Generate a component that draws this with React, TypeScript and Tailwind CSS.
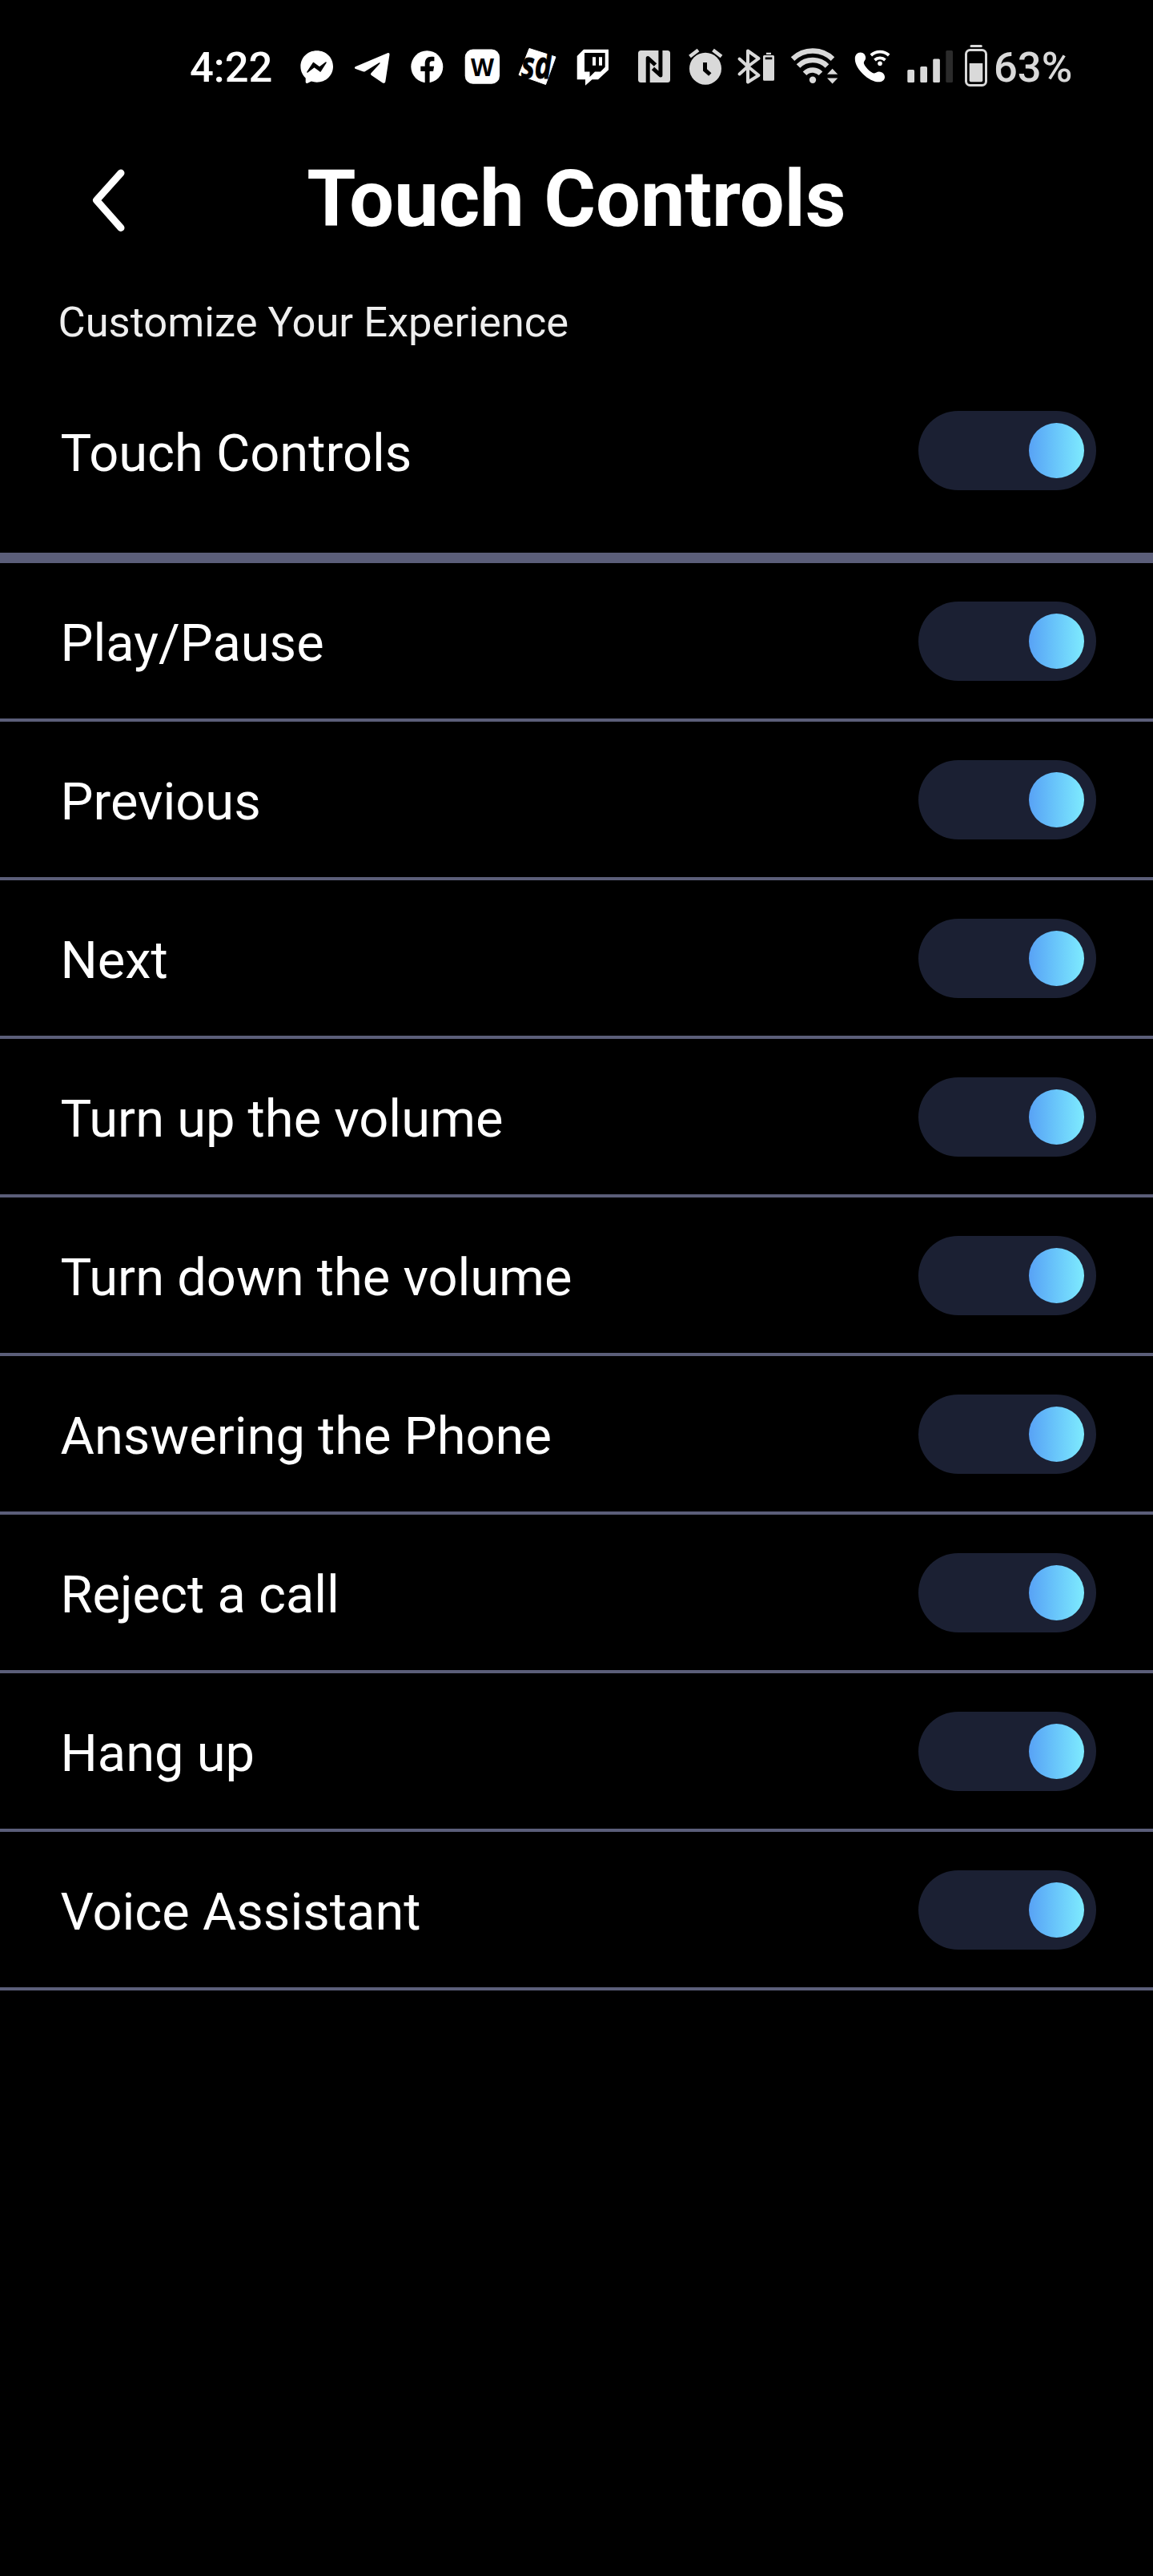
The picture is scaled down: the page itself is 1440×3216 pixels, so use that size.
import React, { useState } from "react";

const actions = [
    "Play/Pause",
    "Previous",
    "Next",
    "Turn up the volume",
    "Turn down the volume",
    "Answering the Phone",
    "Reject a call",
    "Hang up",
    "Voice Assistant",
];

function Toggle({ on, label, onClick }: { on: boolean; label: string; onClick: () => void }) {
    return (
        <button
            type="button"
            role="switch"
            aria-checked={on}
            aria-label={label}
            onClick={onClick}
            className={`flex h-[99px] w-[222px] shrink-0 items-center rounded-full bg-[#1b2033] px-[15px] ${on ? "justify-end" : "justify-start"}`}
        >
            <span className="size-[69px] rounded-full bg-linear-to-r from-[#58a2f5] to-[#7eebfe]" />
        </button>
    );
}

// every status icon is a slice of the same 60px strip, so they sit side by side
function Glyph({ x, w, children }: { x: number; w: number; children: React.ReactNode }) {
    return (
        <svg width={w} height={60} viewBox={`${x} 50 ${w} 60`} fill="currentColor" className="shrink-0">
            {children}
        </svg>
    );
}

function NotificationIcons() {
    return (
        <div className="flex text-white">
            {/* messenger */}
            <Glyph x={370} w={60}>
                <path d="M395.700 63.300c-11.500 0-20.300 8.500-20.300 19.700 0 5.800 2.500 10.800 6.300 14.400v5.200c0 1.100 1.100 1.800 2.100 1.300l5-2.300c2.200.7 4.500 1.100 6.900 1.100 11.500 0 20.300-8.600 20.300-19.700s-8.800-19.700-20.300-19.700z" />
                <path d="M384 90l7.500-11.500 7.500 5.500 8-6-7 11-7.500-5.500z" fill="#000" stroke="#000" strokeWidth="1.500" strokeLinejoin="round" />
            </Glyph>
            {/* telegram */}
            <Glyph x={430} w={70}>
                <path d="M443.800 83.300l40.200-17c1.600-.7 2.700.2 2.500 2l-5.200 33.700c-.3 1.800-2 2.300-3.400 1.400l-14-9.500c-1.200-.9-1.200-1.800-.4-2.700l10.800-11.600c.9-1 0-1.800-1.100-1.100l-17 10.400c-1 .6-2 .7-3 .4l-9-3.300c-1.600-.6-1.700-2-.4-2.700z" />
            </Glyph>
            {/* facebook */}
            <Glyph x={500} w={67}>
                <circle cx="533.300" cy="83.300" r="20" />
                <path d="M530.700 104V89h-5.400v-6.300h5.400v-3.200c0-5.700 3-8.700 8-8.700 1.300 0 2.600.1 3.700.3v5.200h-2.800c-2.300 0-3 1.400-3 3v3.400h5.500l-1 6.300h-4.500v15z" fill="#000" />
            </Glyph>
            <Glyph x={567} w={69}>
                <rect x="580.700" y="61.500" width="43.300" height="43.300" rx="10" />
                <text x="588" y="94.800" fontSize="31" fontWeight="700" textLength="29" lengthAdjust="spacingAndGlyphs" fill="#000" className="font-['Open_Sans',sans-serif]">W</text>
            </Glyph>
            <Glyph x={636} w={72}>
                <path d="M661 60.500l33 10.500-12.500 34.500-33.500-12z" stroke="currentColor" strokeLinejoin="round" />
                <text x="651" y="98" fontSize="46" fontWeight="700" fontStyle="italic" textLength="38" lengthAdjust="spacingAndGlyphs" fill="#000" stroke="#000" strokeWidth="1" className="font-['Open_Sans',sans-serif]">sd</text>
            </Glyph>
            {/* twitch */}
            <Glyph x={708} w={70}>
                <path fillRule="evenodd" d="M729 61.700H760v25.500L747 99.300h-7.500l-8.500 7.400v-7.400h-10.300V70zM730 66v23.500h6.500v6.500l6.500-6.500h7l5.700-5.700V66z" />
                <path d="M740 71.300h4v10.400h-4zM748 71.300h4v10.400h-4z" />
            </Glyph>
        </div>
    );
}

function SystemIcons() {
    return (
        <div className="flex text-[#d9d9d9]">
            {/* nfc */}
            <Glyph x={778} w={72}>
                <rect x="797" y="63" width="40" height="40" rx="3.500" />
                <path d="M809.200 103.500V72.500l9.300 8.500M824.900 62.500v31.500l-9.400-8.500" fill="none" stroke="#000" strokeWidth="5" strokeLinejoin="round" />
            </Glyph>
            {/* alarm */}
            <Glyph x={850} w={62}>
                <circle cx="881" cy="85.700" r="20" />
                <path d="M880.500 78v9.300l6.300 5.700" fill="none" stroke="#000" strokeWidth="5" />
                <path d="M861.500 70.500l10.500-8M890.500 62.500l10.500 8" fill="none" stroke="currentColor" strokeWidth="4.500" />
            </Glyph>
            {/* bluetooth + battery */}
            <Glyph x={912} w={65}>
                <path d="M923.500 73.500l10.500 9.500 13.500 11-13.500 8.500v-39l13.500 9.500-13.500 10-10.500 9.500" fill="none" stroke="currentColor" strokeWidth="4" strokeLinecap="round" strokeLinejoin="round" />
                <path fillRule="evenodd" d="M954.500 69h11q1.500 0 1.500 1.500v28.700q0 1.500-1.500 1.500h-11q-1.500 0-1.500-1.500V70.500q0-1.500 1.500-1.500zM955.700 71.500v2.800h8.600v-2.800zM957 65.700h6V68h-6z" />
            </Glyph>
            {/* wifi */}
            <Glyph x={977} w={80}>
                <circle cx="1015" cy="99.700" r="4.200" />
                <path d="M990 73.700a36 36 0 0 1 50 0M997 82.500a25.500 25.500 0 0 1 36 0M1005 91.800a14 14 0 0 1 20 0" fill="none" stroke="currentColor" strokeWidth="6.500" />
                <path d="M1033 92.700h13.300l-6.700-7zM1033 97.500h13.300l-6.700 7z" />
            </Glyph>
            {/* wifi calling */}
            <Glyph x={1057} w={65}>
                <g className="text-white" fill="currentColor">
                    <path d="M1067.800 73c0-4.400 3-7.400 6.800-7.400 4 0 6.800 3.200 6.500 7.200-.2 2.800-2.300 3.600-2.300 5.600 0 3.500 8.600 12.600 12.800 13 2.400.2 3.400-2.100 6.400-1.900 4.200.3 7.200 3.300 7 7-.2 3.600-3.600 5.800-7.500 5.800-12 0-29.700-16-29.700-28.900z" />
                    <circle cx="1099" cy="79.300" r="2.800" />
                    <path d="M1087.800 69a16.500 16.500 0 0 1 22.400 0M1092.500 75a9.500 9.500 0 0 1 13 0" fill="none" stroke="currentColor" strokeWidth="3.800" />
                </g>
            </Glyph>
            {/* signal */}
            <Glyph x={1122} w={75}>
                <rect x="1133.300" y="87" width="8.700" height="16" rx="1.500" />
                <rect x="1149.300" y="83" width="8.700" height="20" rx="1.500" />
                <rect x="1165.200" y="73.500" width="8.700" height="29.500" rx="1.500" />
                <rect x="1181.300" y="63" width="8.700" height="40" rx="1.500" fill="#2b2b2b" />
            </Glyph>
            {/* battery */}
            <Glyph x={1197} w={44}>
                <rect x="1211.500" y="56" width="15.300" height="3" rx="1.500" />
                <rect x="1206.500" y="62.500" width="25" height="44" rx="5" fill="none" stroke="currentColor" strokeWidth="3" />
                <path d="M1210.700 79h16.600v21.300q0 2-2 2h-12.600q-2 0-2-2z" />
            </Glyph>
        </div>
    );
}

export default function App() {
    const [master, setMaster] = useState(true);
    const [enabled, setEnabled] = useState<boolean[]>(Array(actions.length).fill(true));

    const handleToggle = (index: number) => {
        const next = [...enabled];
        next[index] = !next[index];
        setEnabled(next);
    };

    return (
        <div className="min-h-[3216px] w-full bg-black font-['Roboto',sans-serif] text-white">
            <div className="flex h-[180px] items-start pt-[50px] pl-[237px]">
                <span className="mt-1 w-[133px] shrink-0 text-[52.5px] leading-[61px] font-medium">4:22</span>
                <NotificationIcons />
                <SystemIcons />
                <span className="mt-1 text-[52.5px] leading-[61px] font-medium text-[#d9d9d9]">63%</span>
            </div>

            <header className="grid h-[140px] grid-cols-[240px_1fr_240px] items-center">
                <button type="button" aria-label="Back" className="justify-self-start pl-[112px]">
                    <svg width="48" height="84" viewBox="0 0 48 84" fill="none" stroke="#fff" strokeWidth="9" strokeLinecap="round" strokeLinejoin="round">
                        <path d="M39 8L8.500 42 39 76.500" />
                    </svg>
                </button>
                <h1 className="pb-1 text-center text-[99px] leading-[116px] font-bold whitespace-nowrap">
                    Touch Controls
                </h1>
            </header>

            <p className="pt-[51px] pl-[72.5px] text-[52.5px] leading-[62px] text-[#eeeeee]">
                Customize Your Experience
            </p>

            <div className="mt-0.5 flex h-[268px] items-center justify-between border-b-[13px] border-[#5b5e79] pr-[71px] pl-[75.5px]">
                <span className="pt-[7px] text-[65px] leading-[76px]">Touch Controls</span>
                <Toggle on={master} label="Touch Controls" onClick={() => setMaster(!master)} />
            </div>

            {actions.map((name, index) => (
                <div
                    key={name}
                    className="flex h-[198px] items-center justify-between border-b-4 border-[#5b5e79] pt-px pr-[71px] pl-[75.5px]"
                >
                    <span className="pt-[5px] text-[65px] leading-[76px]">{name}</span>
                    <Toggle on={enabled[index]} label={name} onClick={() => handleToggle(index)} />
                </div>
            ))}
        </div>
    );
}
